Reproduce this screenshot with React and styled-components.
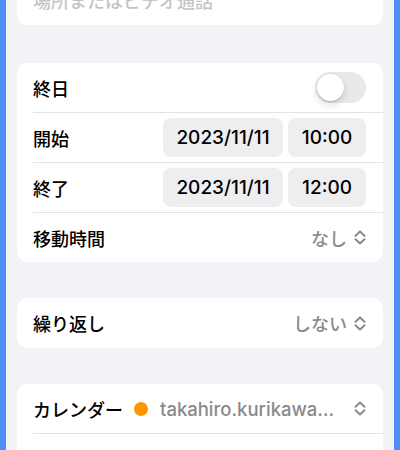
import React from 'react';
import styled, { createGlobalStyle } from 'styled-components';

const GlobalStyle = createGlobalStyle`
  html, body {
    margin: 0;
    padding: 0;
    background: #f2f2f7;
  }
  * {
    box-sizing: border-box;
  }
`;

const Screen = styled.div`
  height: 450px;
  overflow: hidden;
  background: #f2f2f7;
  border-left: 6px solid #508cf6;
  border-right: 6px solid #508cf6;
  padding: 0 11px;
  font-family: "Inter", "Noto Sans CJK JP", sans-serif;
  font-size: 18px;
  color: #000;
`;

// the list is scrolled, the first card is half out of view
const List = styled.div`
  margin-top: -25px;
  display: flex;
  flex-direction: column;
  gap: 36px;
`;

const Card = styled.div`
  background: #fff;
  border-radius: 10px;
  overflow: hidden;
  margin-bottom: ${props => props.$extra ? props.$extra + 'px' : '0'};
`;

const Row = styled.div`
  padding-left: 16px;
`;

const RowBody = styled.div`
  display: flex;
  align-items: center;
  justify-content: space-between;
  height: ${props => props.$divider ? '50px' : props.$tall ? '50px' : '49px'};
  padding-right: 17px;
  border-top: ${props => props.$divider ? '1px solid #e3e3e6' : 'none'};
`;

const Label = styled.div`
  font-weight: 500;
  white-space: nowrap;
`;

const Placeholder = styled.div`
  color: #c4c4c7;
  font-weight: 500;
`;

const Track = styled.div`
  width: 51px;
  height: 31px;
  border-radius: 16px;
  background: #e9e9eb;
  padding: 2px;
  display: flex;
  align-items: center;
`;

const Knob = styled.div`
  width: 27px;
  height: 27px;
  border-radius: 50%;
  background: #fff;
  box-shadow: 0 3px 8px rgba(0, 0, 0, 0.15), 0 1px 1px rgba(0, 0, 0, 0.16);
`;

const Pills = styled.div`
  display: flex;
  gap: 5px;
`;

const Pill = styled.div`
  width: ${props => props.$w}px;
  height: 39px;
  border-radius: 8px;
  background: #eeeef0;
  display: flex;
  align-items: center;
  justify-content: center;
  font-size: 19px;
  font-weight: 500;
`;

const Picker = styled.div`
  display: flex;
  align-items: center;
  gap: 7px;
  color: #8a8a8e;
  font-weight: 500;
`;

const CalendarLeft = styled.div`
  display: flex;
  align-items: center;
  flex: 1;
  min-width: 0;
`;

const Dot = styled.span`
  flex: none;
  width: 14px;
  height: 14px;
  border-radius: 50%;
  background: #ff9500;
  margin: 0 12px 0 11px;
`;

const Account = styled.div`
  flex: 1;
  min-width: 0;
  color: #8a8a8e;
  font-size: 18.5px;
  font-weight: 500;
  white-space: nowrap;
  overflow: hidden;
  text-overflow: ellipsis;
  margin-right: 13px;
`;

const Chevrons = () => (
  <svg width="12" height="15" viewBox="0 0 12 15" fill="none">
    <path d="M1.5 5.8 L6 1.5 L10.5 5.8" stroke="#8a8a8e" strokeWidth="2" strokeLinecap="round" strokeLinejoin="round" />
    <path d="M1.5 9.2 L6 13.5 L10.5 9.2" stroke="#8a8a8e" strokeWidth="2" strokeLinecap="round" strokeLinejoin="round" />
  </svg>
);

const Switch = () => (
  <Track>
    <Knob />
  </Track>
);

const DateTime = ({ date, time }) => (
  <Pills>
    <Pill $w={120}>{date}</Pill>
    <Pill $w={78}>{time}</Pill>
  </Pills>
);

export default function App() {
  return (
    <>
      <GlobalStyle />
      <Screen>
        <List>
          <Card $extra={2}>
            <Row>
              <RowBody $tall>
                <Placeholder>場所またはビデオ通話</Placeholder>
              </RowBody>
            </Row>
          </Card>

          <Card>
            <Row>
              <RowBody>
                <Label>終日</Label>
                <Switch />
              </RowBody>
            </Row>
            <Row>
              <RowBody $divider>
                <Label>開始</Label>
                <DateTime date="2023/11/11" time="10:00" />
              </RowBody>
            </Row>
            <Row>
              <RowBody $divider>
                <Label>終了</Label>
                <DateTime date="2023/11/11" time="12:00" />
              </RowBody>
            </Row>
            <Row>
              <RowBody $divider>
                <Label>移動時間</Label>
                <Picker>なし<Chevrons /></Picker>
              </RowBody>
            </Row>
          </Card>

          <Card>
            <Row>
              <RowBody $tall>
                <Label>繰り返し</Label>
                <Picker>しない<Chevrons /></Picker>
              </RowBody>
            </Row>
          </Card>

          <Card>
            <Row>
              <RowBody>
                <CalendarLeft>
                  <Label>カレンダー</Label>
                  <Dot />
                  <Account>takahiro.kurikawa@example.com</Account>
                </CalendarLeft>
                <Chevrons />
              </RowBody>
            </Row>
            <Row>
              <RowBody $divider />
            </Row>
          </Card>
        </List>
      </Screen>
    </>
  );
}
